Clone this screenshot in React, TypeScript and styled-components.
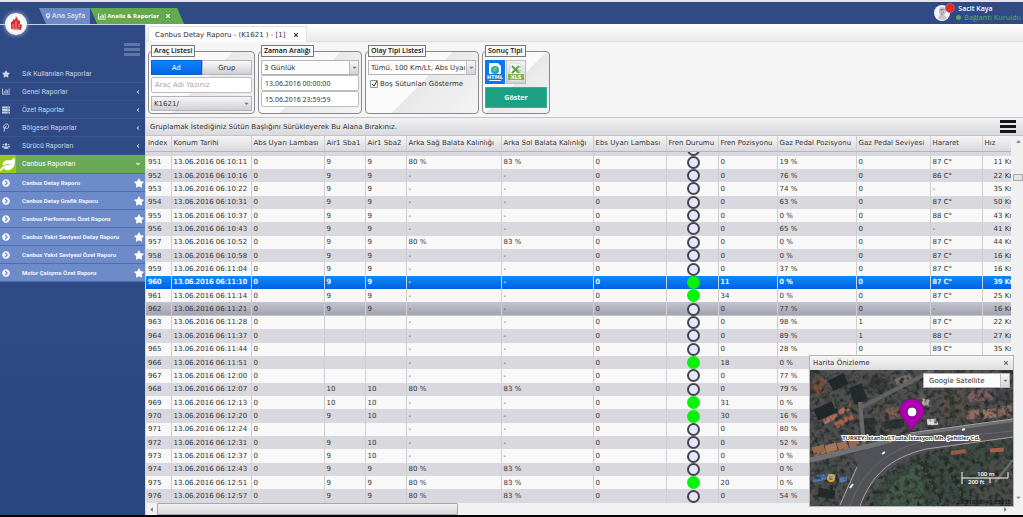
import React from 'react';
import styled, { createGlobalStyle, css } from 'styled-components';
import {
  FaStar, FaServer, FaUsers, FaLeaf, FaChevronCircleRight, FaAngleLeft, FaAngleDown,
  FaMapMarkerAlt, FaTimes, FaCaretDown, FaCaretUp, FaCaretLeft, FaCaretRight,
} from 'react-icons/fa';

const GlobalStyle = createGlobalStyle`
  *, *::before, *::after { box-sizing: border-box; }
  body { margin: 0; background: #f5f5f5; }
  button, input, select { font: inherit; color: inherit; margin: 0; padding: 0; border: 0; border-radius: 0; }
  svg { display: block; }
`;

const Page = styled.div`
  display: flex;
  flex-direction: column;
  height: 100vh;
  min-height: 400px;
  overflow: hidden;
  position: relative;
  font: 7px/10px 'DejaVu Sans', sans-serif;
  color: #333;
  border-top: 2px solid #e4e4e6;
  border-bottom: 2px solid #050505;
`;

const TopBar = styled.header`
  display: flex;
  align-items: flex-end;
  justify-content: space-between;
  height: 22px;
  flex: none;
  background: #2f4a84;
  color: #fff;
  font-family: 'Open Sans', sans-serif;
  font-weight: 600;
`;

const Tabs = styled.nav`
  display: flex;
  padding-left: 39px;
`;

const PageTab = styled.a<{ $active?: boolean }>`
  display: flex;
  align-items: center;
  gap: 1px;
  height: 16px;
  padding: 0 ${p => (p.$active ? 13 : 5)}px 0 ${p => (p.$active ? 8 : 6)}px;
  color: ${p => (p.$active ? '#fff' : '#dde6fa')};
  background: ${p => (p.$active ? '#62a94f' : '#6d8ac9')};
  font-size: ${p => (p.$active ? 6 : 7)}px;
  font-weight: ${p => (p.$active ? 700 : 600)};
  clip-path: ${p => p.$active
    ? 'polygon(0 0, calc(100% - 7px) 0, 100% 100%, 7px 100%)'
    : 'polygon(0 0, 100% 0, 100% 100%, 7px 100%)'};
  text-decoration: none;
  white-space: nowrap;
`;

const TabClose = styled.span`
  margin-left: 5px;
`;

const User = styled.div`
  display: flex;
  align-items: center;
  gap: 8px;
  height: 22px;
  padding-right: 2px;
  line-height: 9px;
`;

const Avatar = styled.div`
  position: relative;
  width: 16px;
  height: 16px;
`;

const Badge = styled.span`
  position: absolute;
  top: -2px;
  right: -5px;
  width: 10px;
  height: 10px;
  border-radius: 50%;
  background: #e2282c;
  border: 1px solid #b8646f;
`;

const Status = styled.div`
  display: flex;
  align-items: center;
  gap: 3px;
  margin-left: -2px;
  color: #4e9a62;
`;

const Dot = styled.span`
  width: 5px;
  height: 5px;
  border-radius: 50%;
  background: #58a662;
`;

const Logo = styled.div`
  position: absolute;
  left: 5px;
  top: 11px;
  width: 22px;
  height: 22px;
  border-radius: 50%;
  background: radial-gradient(#fff 50%, #e2e0e0 80%);
  box-shadow: 0 0 5px #a9b9dc;
`;

const Body = styled.div`
  display: flex;
  flex: 1;
  min-height: 0;
`;

const Sidebar = styled.aside`
  flex: none;
  width: 145px;
  border-top: 1px solid #c9d1e4;
  background: linear-gradient(#2f4a84 0 60%, #2a4681);
  color: #c9d3e8;
  font-family: Roboto, sans-serif;
`;

const MenuToggle = styled.button`
  display: flex;
  flex-direction: column;
  gap: 2px;
  width: 16px;
  margin: 18px 5px 9px auto;
  background: none;
  span { height: 3px; background: #6076a6; }
`;

const MenuList = styled.ul`
  list-style: none;
  margin: 0;
  padding: 0;
`;

const MenuItem = styled.a<{ $kind?: 'open' | 'sub' }>`
  display: flex;
  align-items: center;
  height: 18px;
  padding-right: 4px;
  border-bottom: 1px solid #3b5590;
  color: inherit;
  text-decoration: none;
  white-space: nowrap;
  ${p => p.$kind === 'open' && css`
    background: #69a854;
    border-color: #69a854;
    color: #fff;
  `}
  ${p => p.$kind === 'sub' && css`
    background: #6d8ac9;
    border-color: #4f6eb0;
    color: #f2f6ff;
    padding-right: 1px;
    font-size: 6px;
    font-weight: 700;
  `}
`;

const SubMenu = styled(MenuList)`
  border-top: 1px solid #4f6eb0;
`;

const MenuIcon = styled.span<{ $leaf?: boolean }>`
  display: flex;
  align-items: center;
  align-self: stretch;
  flex: none;
  width: 16px;
  margin-right: 6px;
  padding-left: 2px;
  font-size: 8px;
  ${p => p.$leaf && css`
    padding: 0;
    margin-bottom: -1px;
    font-size: 15px;
    background: #98c81c;
  `}
`;

const MenuText = styled.span`
  flex: 1;
`;

const Star = styled.span`
  font-size: 10px;
  color: #fff;
`;

const Main = styled.main`
  display: flex;
  flex-direction: column;
  flex: 1;
  min-width: 0;
  background: #f5f5f5;
  border-left: 1px solid #d5d9e4;
`;

const DocTabs = styled.div`
  display: flex;
  flex: none;
  height: 18px;
  padding: 2px 2px 0;
  background: linear-gradient(#fff, #e9e9ea);
  border-bottom: 1px solid #e0e0e0;
`;

const DocTab = styled.div`
  display: flex;
  align-items: center;
  gap: 8px;
  height: 16px;
  padding: 0 7px 0 6px;
  background: #fdfdfd;
  border: 1px solid #e2e2e2;
  border-bottom: 0;
`;

const Filters = styled.form`
  display: flex;
  flex: none;
  gap: 3px;
  height: 75px;
  padding: 3px 2px 3px;
`;

const Group = styled.fieldset<{ $width: number }>`
  flex: none;
  width: ${p => p.$width}px;
  min-width: 0;
  margin: 0;
  padding: 3px 2px;
  border: 1px solid #8a8a8e;
  border-radius: 4px;
  background: linear-gradient(135deg, #fafafa 0 50%, #e8e8e8 50%, #f4f4f4);
`;

const Legend = styled.legend`
  padding: 0 2px;
  border: 1px solid #77777b;
  background: #f8f8f8;
  color: #111;
  font: 600 7px/10px 'Open Sans', sans-serif;
`;

const Segments = styled.div`
  display: flex;
  margin-bottom: 2px;
`;

const Segment = styled.button<{ $on?: boolean }>`
  flex: 1;
  height: 15px;
  border: 1px solid ${p => (p.$on ? '#0a5fd0' : '#b5b5ba')};
  background: ${p => (p.$on ? 'linear-gradient(#0a86fb, #0565e6)' : 'linear-gradient(#fafafa, #cfcfd4)')};
  color: ${p => (p.$on ? '#fff' : '#333')};
`;

const TextInput = styled.input<{ $lined?: boolean }>`
  display: block;
  width: 100%;
  height: 16px;
  padding: 0 3px;
  border: 1px solid #bdbdc0;
  border-radius: 2px;
  background: #fff;
  font-family: ${p => (p.$lined ? "'Noto Sans', sans-serif" : 'inherit')};
  &::placeholder { color: #a5a5a5; opacity: 1; }
`;

const SelectBox = styled.div<{ $gray?: boolean; $top?: number }>`
  position: relative;
  margin-top: ${p => p.$top ?? 0}px;
  select {
    display: block;
    appearance: none;
    width: 100%;
    height: 15px;
    padding: 0 10px 0 2px;
    border: 1px solid #b4b4b8;
    background: ${p => (p.$gray ? 'linear-gradient(#f6f6f6, #d0d0d5)' : '#fcfcfc')};
  }
`;

const Arrow = styled.span<{ $plain?: boolean }>`
  position: absolute;
  inset: 1px 1px 1px auto;
  width: 9px;
  display: flex;
  align-items: center;
  justify-content: center;
  color: #77777c;
  pointer-events: none;
  border-left: ${p => (p.$plain ? '0' : '1px solid #bcbcc0')};
  background: ${p => (p.$plain ? 'none' : 'linear-gradient(#f6f6f6, #d4d4d8)')};
`;

const Check = styled.label`
  display: flex;
  align-items: center;
  gap: 2px;
  margin-top: 4px;
  padding-left: 2px;
  input {
    appearance: none;
    width: 8px;
    height: 8px;
    border: 1px solid #8f8f94;
    border-radius: 1px;
    background: #fff;
  }
  svg { position: absolute; pointer-events: none; }
`;

const Formats = styled.div`
  display: flex;
  gap: 1px;
  margin-bottom: 3px;
`;

const Format = styled.button<{ $on?: boolean }>`
  width: 20px;
  height: 24px;
  display: flex;
  align-items: center;
  justify-content: center;
  background: ${p => (p.$on ? '#0878ee' : 'linear-gradient(#f4f4f4, #cfcfd4)')};
  border: 1px solid ${p => (p.$on ? '#0878ee' : '#bdbdc2')};
`;

const Show = styled.button`
  width: 100%;
  height: 21px;
  background: #1ba083;
  border: 1px solid #35b095;
  color: #fff;
  font: 700 7px/10px 'Noto Sans', sans-serif;
`;

const GroupBar = styled.div`
  display: flex;
  align-items: center;
  justify-content: space-between;
  flex: none;
  height: 19px;
  padding: 0 7px 0 4px;
  border: 1px solid #c4c4c8;
  border-width: 1px 0;
  background: linear-gradient(#f2f2f2, #d9d9de);
`;

const GridMenu = styled.button`
  display: flex;
  flex-direction: column;
  gap: 2px;
  width: 16px;
  background: none;
  span { height: 3px; background: #15151c; }
`;

const GridArea = styled.div`
  display: flex;
  flex: 1;
  min-height: 0;
`;

const TableWrap = styled.div`
  flex: 1;
  min-width: 0;
  overflow: hidden;
`;

const Table = styled.table`
  width: 100%;
  height: 100%;
  table-layout: fixed;
  border-collapse: collapse;
  white-space: nowrap;
  th, td {
    padding: 0 0 0 2px;
    overflow: hidden;
    text-align: left;
    font-weight: 400;
    border-right: 1px solid #cfcfd3;
    line-height: 12px;
  }
  th:last-child, td:last-child { border-right: 0; }
  td:last-child { padding-left: 11px; }
`;

const HeadRow = styled.tr`
  height: 15px;
  background: linear-gradient(#f5f5f5, #d9d9de);
  th { border-bottom: 1px solid #b4b4ba; }
`;

const PartialRow = styled.tr`
  height: 4px;
  background: #d8d8de;
  td { line-height: 4px; }
`;

const Row = styled.tr<{ $state?: 'selected' | 'hover' }>`
  background: #f8f8f8;
  &:nth-child(odd) { background: #d8d8de; }
  ${p => p.$state === 'selected' && css`
    &&& { background: linear-gradient(#0b8bfa, #0060e2); color: #fff; }
    &&& td { text-shadow: 0 0 1px #fff; }
  `}
  ${p => p.$state === 'hover' && css`
    &&& { background: linear-gradient(#c4c4ce, #a3a3b1); }
  `}
`;

const Lamp = styled.span<{ $on?: boolean }>`
  display: block;
  width: 13px;
  height: 13px;
  margin: 0 auto;
  border-radius: 50%;
  border: ${p => (p.$on ? '0' : '2px solid #44444f')};
  background: ${p => (p.$on ? '#0af20a' : '#e6e6fa')};
`;

const LampTail = styled.span`
  display: flex;
  align-items: flex-end;
  height: 4px;
  overflow: hidden;
`;

const ScrollY = styled.div`
  display: flex;
  flex-direction: column;
  align-items: center;
  flex: none;
  width: 12px;
  padding: 2px 0 2px 2px;
  background: #f0f0f1;
  color: #77777c;
`;

const ThumbY = styled.span`
  width: 10px;
  height: 7px;
  margin: 29px 0 auto;
  border: 1px solid #a8a8ac;
  background: #e6e6e8;
`;

const ScrollX = styled.div`
  display: flex;
  align-items: center;
  flex: none;
  height: 12px;
  padding: 0 14px 0 2px;
  background: #f2f2f3;
  color: #77777c;
`;

const ThumbX = styled.span`
  width: 35%;
  height: 12px;
  margin: 0 auto 0 2px;
  border: 1px solid #a8a8ac;
  border-radius: 1px;
  background: linear-gradient(#f0f0f1, #d8d8db);
`;

const MapWindow = styled.section`
  position: absolute;
  right: 9px;
  bottom: 8px;
  width: 205px;
  border: 1px solid #b4b4b8;
  background: #ececee;
`;

const MapTitle = styled.header`
  display: flex;
  align-items: center;
  justify-content: space-between;
  height: 14px;
  padding: 0 4px 0 3px;
  background: linear-gradient(#f6f6f6, #dedee1);
`;

const CloseButton = styled.button`
  background: none;
  color: #66666a;
  font-size: 6px;
`;

const MapBody = styled.div`
  position: relative;
`;

const LayerSelect = styled(SelectBox)`
  position: absolute;
  top: 3px;
  right: 3px;
  width: 87px;
  select { padding-left: 5px; }
`;

const ChartIcon = () => (
  <svg width="8" height="7" viewBox="0 0 18 16" fill="currentColor">
    <path d="M0 1h2v12h16v2H0zM4 7h2v5H4zM8 3h2v9H8zM11 5h2v7h-2zM15 1h2v11h-2z" />
  </svg>
);

const RegionIcon = () => (
  <svg width="8" height="9" viewBox="0 0 16 18" fill="none" stroke="currentColor" strokeWidth="2">
    <path d="M5 12C2 11 2 3 9 2c6 0 6 9 0 9-3 0-3-5 0-5M6 8L4 17" />
  </svg>
);

const menu = [
  ['Sık Kullanılan Raporlar', <FaStar />],
  ['Genel Raporlar', <ChartIcon />],
  ['Özet Raporlar', <FaServer />],
  ['Bölgesel Raporlar', <RegionIcon />],
  ['Sürücü Raporları', <FaUsers />],
] as [string, React.ReactNode][];

const subMenu = [
  'Canbus Detay Raporu', 'Canbus Detay Grafik Raporu', 'Canbus Performans Özet Raporu',
  'Canbus Yakıt Seviyesi Detay Raporu', 'Canbus Yakıt Seviyesi Özet Raporu', 'Motor Çalışma Özet Raporu',
];

const columns: [string, number | null][] = [
  ['Index', 25], ['Konum Tarihi', 80], ['Abs Uyarı Lambası', 73], ['Air1 Sba1', 41], ['Air1 Sba2', 41],
  ['Arka Sağ Balata Kalınlığı', 95], ['Arka Sol Balata Kalınlığı', 92], ['Ebs Uyarı Lambası', 73],
  ['Fren Durumu', 52], ['Fren Pozisyonu', 59], ['Gaz Pedal Pozisyonu', 79], ['Gaz Pedal Seviyesi', 74],
  ['Hararet', 52], ['Hız', null],
];

// time, sba1, sba2, brake pads known, brake position, gas position, gas level, heat, speed
type Entry = [string, string, string, boolean, number, number, number, string, number];
const entries: Entry[] = [
  ['10:11', '9', '9', true, 0, 19, 0, '87 C°', 11],
  ['10:16', '9', '9', false, 0, 76, 0, '86 C°', 22],
  ['10:22', '9', '9', false, 0, 74, 0, '-', 35],
  ['10:31', '9', '9', false, 0, 63, 0, '87 C°', 50],
  ['10:37', '9', '9', false, 0, 0, 0, '88 C°', 43],
  ['10:43', '9', '9', false, 0, 65, 0, '-', 41],
  ['10:52', '9', '9', true, 0, 0, 0, '87 C°', 44],
  ['10:58', '9', '9', false, 0, 0, 0, '87 C°', 16],
  ['11:04', '9', '9', false, 0, 37, 0, '87 C°', 16],
  ['11:10', '9', '9', false, 11, 0, 0, '87 C°', 39],
  ['11:14', '9', '9', false, 34, 0, 0, '87 C°', 25],
  ['11:21', '9', '9', false, 0, 77, 0, '-', 16],
  ['11:28', '', '', false, 0, 98, 1, '87 C°', 22],
  ['11:37', '', '', false, 0, 89, 1, '88 C°', 27],
  ['11:44', '', '', false, 0, 28, 0, '89 C°', 35],
  ['11:51', '', '', false, 18, 0, 0, '', 0],
  ['12:00', '', '', false, 0, 77, 0, '', 0],
  ['12:07', '10', '10', true, 0, 79, 0, '', 0],
  ['12:13', '10', '10', false, 31, 0, 0, '', 0],
  ['12:20', '9', '10', false, 30, 16, 0, '', 0],
  ['12:24', '', '', false, 0, 80, 0, '', 0],
  ['12:31', '9', '10', false, 0, 52, 0, '', 0],
  ['12:37', '9', '10', false, 0, 0, 0, '', 0],
  ['12:43', '9', '9', true, 0, 0, 0, '', 0],
  ['12:51', '9', '9', true, 20, 0, 0, '', 0],
  ['12:57', '9', '9', true, 0, 54, 0, '', 0],
];

const treeDots = Array.from({ length: 110 }, (_, i) => ({
  x: 108 + ((i * 37) % 50),
  y: 88 + ((i * 23) % 48),
  r: 1 + (i % 2),
}));

const blocks: [number, number, number, number, number, string][] = [
  [2, 8, 13, 17, 12, '#75503f'], [20, 6, 17, 12, -25, '#22292c'], [41, 15, 14, 18, -20, '#252c2d'],
  [60, 7, 17, 13, 20, '#393c39'], [5, 35, 20, 12, -25, '#20282a'], [24, 48, 20, 6, -30, '#a7604a'],
  [13, 46, 15, 5, -28, '#b6735f'], [28, 37, 14, 5, -28, '#b07055'], [53, 48, 12, 19, 0, '#303735'],
  [62, 32, 15, 9, -30, '#535047'], [76, 38, 13, 10, -14, '#80614f'], [86, 6, 16, 10, -20, '#776f67'],
  [104, 23, 18, 14, 12, '#575b58'], [112, 29, 7, 8, 10, '#b5afa5'], [117, 49, 11, 6, -3, '#e2e0da'],
  [74, 50, 20, 8, -8, '#2c3531'], [158, 20, 24, 11, -6, '#7b6063'], [156, 40, 13, 9, -6, '#926c60'],
  [173, 39, 13, 9, -6, '#9a7466'], [188, 36, 14, 10, -6, '#89685e'], [186, 20, 17, 12, 8, '#444548'],
  [141, 80, 15, 7, -8, '#9b5747'], [180, 78, 14, 7, -5, '#a7604c'], [3, 76, 12, 9, -16, '#986a52'],
  [16, 74, 11, 10, -16, '#a77858'], [28, 72, 10, 9, -16, '#a37054'], [39, 70, 10, 8, -14, '#976c57'],
  [5, 95, 22, 13, 8, '#434849'], [3, 105, 13, 6, -8, '#4a83b9'], [16, 104, 10, 5, 6, '#649cc4'],
  [29, 107, 8, 5, -6, '#557dae'], [8, 119, 17, 9, 10, '#232d2b'],
];
const roofs = blocks.filter(([, y, , h]) => y > 68 && h < 11 && y < 90);

const SatelliteMap = () => (
  <svg width="100%" viewBox="0 0 203 136" role="img" aria-label="Harita">
    <defs>
      <filter id="grain" x="0" y="0" width="100%" height="100%" colorInterpolationFilters="sRGB">
        <feTurbulence type="fractalNoise" baseFrequency="0.2" numOctaves="3" seed="8" />
        <feColorMatrix values="0 0 0 0 .13  0 0 0 0 .15  0 0 0 0 .16  2 1.4 0 0 -1.5" />
      </filter>
    </defs>
    <rect width="203" height="136" fill="#4f504e" />
    <path d="M131 16l22 0 4 32-24 3z" fill="#5a5048" />
    <path d="M140 18l4 30" stroke="#3f463c" strokeWidth="5" />
    {blocks.map(([x, y, w, h, a, c], i) => (
      <rect key={i} x={x} y={y} width={w} height={h} fill={c} transform={`rotate(${a} ${x + w / 2} ${y + h / 2})`} />
    ))}
    <path d="M58 136C68 112 88 92 116 82l87-14v68z" fill="#3f4b42" />
    <path d="M72 136c3-18 20-34 38-42l5 42z" fill="#455a48" />
    <path d="M158 104l45-22v54h-39z" fill="#4b4e48" />
    {treeDots.map((d, i) => <circle key={i} cx={d.x} cy={d.y} r={d.r} fill={i % 3 ? '#26322b' : '#4d5549'} />)}
    <rect width="203" height="136" filter="url(#grain)" />
    {roofs.map(([x, y, w, h, a, c], i) => (
      <rect key={i} x={x} y={y} width={w} height={h - 3} fill={c} transform={`rotate(${a} ${x + w / 2} ${y + h / 2})`} />
    ))}
    <path d="M50 32l4 44" stroke="#6a696a" strokeWidth="4" />
    <path d="M50 38L100 12 123 0" fill="none" stroke="#636366" strokeWidth="4" />
    <path d="M185 112l18-22" stroke="#716f6b" strokeWidth="2" />
    <path d="M0 90L55 77 100 66 203 52" fill="none" stroke="#737173" strokeWidth="5" />
    <path d="M29 136L47 95l-4-12 20-5 40-12 100-14v15l-73 11C90 86 62 106 50 136z" fill="#515158" />
    <path d="M40 136C52 101 78 77 124 69l79-8" fill="none" stroke="#69676d" strokeWidth="1" />
    <path d="M50 136C61 106 79 88 116 79l87-12" fill="none" stroke="#aaa39b" strokeWidth="1" />
    <path d="M30 135l17-38M100 63l103-14" fill="none" stroke="#aaa7a3" strokeWidth="1" />
    <path d="M40 118l3-4M72 84l3-2M152 60l3-1" stroke="#eee" strokeWidth="2" />
    <circle cx="21" cy="108" r="3" fill="none" stroke="#e8a22f" strokeWidth="2" />
    <path d="M101 61C98 51 90 48 90 41a12 12 0 0 1 24 0c0 7-9 11-13 20z" fill="#b000b4" stroke="#85008b" strokeWidth="1" />
    <circle cx="102" cy="42" r="5" fill="#fff" stroke="#5c0064" strokeWidth="1" />
    <text x="101" y="70" textAnchor="middle" fontFamily="'Open Sans', sans-serif" fontSize="6" fontWeight="600" fill="#111" stroke="#fff" strokeWidth="2" paintOrder="stroke">
      TURKEY,İstanbul,Tuzla,İstasyon Mh. Şehitler Cd.
    </text>
    <path d="M152 102v6h46v-6M152 108v6M180 108v5" fill="none" stroke="#fff" strokeWidth="1" />
    <g fontFamily="'Open Sans', sans-serif" fontSize="6" fontWeight="600" fill="#fff">
      <text x="167" y="106">100 m</text>
      <text x="158" y="114">200 ft</text>
    </g>
    <text x="201" y="134" textAnchor="end" fontFamily="'Noto Sans', sans-serif" fontSize="6" fill="#0b0b0b">29.31913, 40.83218</text>
  </svg>
);

export default function App() {
  return (
    <Page>
      <GlobalStyle />
      <TopBar>
        <Tabs>
          <PageTab href="#home"><FaMapMarkerAlt size={6} />Ana Sayfa</PageTab>
          <PageTab href="#reports" $active><ChartIcon />Analiz &amp; Raporlar<TabClose><FaTimes size={6} /></TabClose></PageTab>
        </Tabs>
        <User>
          <Avatar>
            <svg width="16" height="16" viewBox="0 0 16 16">
              <circle cx="8" cy="8" r="8" fill="#f4f4f4" />
              <path d="M5 5c0-4 7-4 7 0 0 3-1 4-2 5l3 3c-2 2-7 2-9 0l2-3C5 9 5 7 5 5z" fill="#c3c3c5" />
              <path d="M6 5c2 0 3 0 4-1M7 7h1M9 7h1M7 9h2" stroke="#88888c" strokeWidth="1" />
            </svg>
            <Badge />
          </Avatar>
          <div>
            Sacit Kaya
            <Status><Dot />Bağlantı Kuruldu</Status>
          </div>
        </User>
      </TopBar>
      <Body>
        <Sidebar>
          <MenuToggle aria-label="Menü"><span /><span /><span /></MenuToggle>
          <MenuList>
            {menu.map(([label, icon], i) => (
              <li key={label}>
                <MenuItem href="#menu">
                  <MenuIcon>{icon}</MenuIcon>
                  <MenuText>{label}</MenuText>
                  {i > 0 && <FaAngleLeft size={6} />}
                </MenuItem>
              </li>
            ))}
            <li>
              <MenuItem href="#canbus" $kind="open">
                <MenuIcon $leaf><FaLeaf /></MenuIcon>
                <MenuText>Canbus Raporları</MenuText>
                <FaAngleDown size={6} />
              </MenuItem>
              <SubMenu>
                {subMenu.map(label => (
                  <li key={label}>
                    <MenuItem href="#canbus" $kind="sub">
                      <MenuIcon><FaChevronCircleRight /></MenuIcon>
                      <MenuText>{label}</MenuText>
                      <Star><FaStar /></Star>
                    </MenuItem>
                  </li>
                ))}
              </SubMenu>
            </li>
          </MenuList>
        </Sidebar>
        <Main>
          <DocTabs>
            <DocTab>Canbus Detay Raporu - (K1621 ) - [1]<FaTimes size={6} /></DocTab>
          </DocTabs>
          <Filters onSubmit={e => e.preventDefault()}>
            <Group $width={107}>
              <Legend>Araç Listesi</Legend>
              <Segments>
                <Segment type="button" $on>Ad</Segment>
                <Segment type="button">Grup</Segment>
              </Segments>
              <TextInput placeholder="Araç Adı Yazınız" aria-label="Araç Adı" />
              <SelectBox $gray $top={3}>
                <select aria-label="Araç"><option>K1621/</option></select>
                <Arrow $plain><FaCaretDown /></Arrow>
              </SelectBox>
            </Group>
            <Group $width={104}>
              <Legend>Zaman Aralığı</Legend>
              <SelectBox>
                <select aria-label="Zaman Aralığı"><option>3 Günlük</option></select>
                <Arrow><FaCaretDown /></Arrow>
              </SelectBox>
              <TextInput $lined defaultValue="13.06.2016 00:00:00" aria-label="Başlangıç" />
              <TextInput $lined defaultValue="15.06.2016 23:59:59" aria-label="Bitiş" />
            </Group>
            <Group $width={114}>
              <Legend>Olay Tipi Listesi</Legend>
              <SelectBox>
                <select aria-label="Olay Tipi"><option>Tümü, 100 Km/Lt, Abs Uyarı</option></select>
                <Arrow><FaCaretDown /></Arrow>
              </SelectBox>
              <Check>
                <input type="checkbox" defaultChecked />
                <svg width="8" height="8" viewBox="0 0 8 8"><path d="M2 4l2 2 3-5" fill="none" stroke="#222" strokeWidth="1" /></svg>
                Boş Sütunları Gösterme
              </Check>
            </Group>
            <Group $width={68}>
              <Legend>Sonuç Tipi</Legend>
              <Formats>
                <Format type="button" $on aria-label="HTML">
                  <svg width="16" height="20" viewBox="0 0 16 20">
                    <path d="M2 1h9l3 3v15H2z" fill="#eef6fb" />
                    <circle cx="8" cy="8" r="4" fill="#2f9fc0" />
                    <path d="M6 6l3-1 1 2-2 3-2-1z" fill="#6bc56a" />
                    <rect y="12" width="16" height="6" fill="#1e74cf" />
                    <text x="8" y="17" fontSize="5" fontWeight="700" textAnchor="middle" fill="#fff">HTML</text>
                  </svg>
                </Format>
                <Format type="button" aria-label="XLS">
                  <svg width="16" height="20" viewBox="0 0 16 20">
                    <path d="M2 1h9l3 3v15H2z" fill="#f8faf6" stroke="#d4d9d0" />
                    <path d="M4 4l7 7M11 4l-7 7" stroke="#5b9d45" strokeWidth="2" />
                    <path d="M9 5h4M9 8h4M9 10h4" stroke="#86b873" />
                    <rect y="12" width="16" height="6" fill="#7fbb3d" />
                    <text x="8" y="17" fontSize="5" fontWeight="700" textAnchor="middle" fill="#fff">XLS</text>
                  </svg>
                </Format>
              </Formats>
              <Show type="submit">Göster</Show>
            </Group>
          </Filters>
          <GroupBar>
            <span>Gruplamak İstediğiniz Sütün Başlığını Sürükleyerek Bu Alana Bırakınız.</span>
            <GridMenu aria-label="Tablo menüsü"><span /><span /><span /></GridMenu>
          </GroupBar>
          <GridArea>
            <TableWrap>
              <Table>
                <colgroup>
                  {columns.map(([name, w]) => <col key={name} width={w ?? undefined} />)}
                </colgroup>
                <thead>
                  <HeadRow>{columns.map(([name]) => <th key={name}>{name}</th>)}</HeadRow>
                </thead>
                <tbody>
                  <PartialRow>
                    {columns.map(([name]) => <td key={name}>{name === 'Fren Durumu' && <LampTail><Lamp /></LampTail>}</td>)}
                  </PartialRow>
                  {entries.map(([time, a, b, pads, brake, gas, level, heat, speed], i) => (
                    <Row key={time} $state={i === 9 ? 'selected' : i === 11 ? 'hover' : undefined}>
                      <td>{951 + i}</td>
                      <td>13.06.2016 06:{time}</td>
                      <td>0</td>
                      <td>{a}</td>
                      <td>{b}</td>
                      <td>{pads ? '80 %' : '-'}</td>
                      <td>{pads ? '83 %' : '-'}</td>
                      <td>0</td>
                      <td><Lamp $on={brake > 0} /></td>
                      <td>{brake}</td>
                      <td>{gas} %</td>
                      <td>{heat ? level : ''}</td>
                      <td>{heat}</td>
                      <td>{heat ? `${speed} Km/s` : ''}</td>
                    </Row>
                  ))}
                </tbody>
              </Table>
            </TableWrap>
            <ScrollY><FaCaretUp /><ThumbY /><FaCaretDown /></ScrollY>
          </GridArea>
          <ScrollX><FaCaretLeft /><ThumbX /><FaCaretRight /></ScrollX>
        </Main>
      </Body>
      <Logo>
        <svg width="22" height="22" viewBox="0 0 22 22">
          <path d="M6 16V9l2-1V6l2 1 1-4 2 4 2 1v3l2 1-1 5z" fill="#dc2a2c" />
          <path d="M8 11v4M11 8v7M14 11v3M7 16h8" stroke="#f2a09d" strokeWidth="1" />
        </svg>
      </Logo>
      <MapWindow>
        <MapTitle>Harita Önizleme<CloseButton aria-label="Kapat"><FaTimes /></CloseButton></MapTitle>
        <MapBody>
          <SatelliteMap />
          <LayerSelect>
            <select aria-label="Harita katmanı"><option>Google Satellite</option></select>
            <Arrow><FaCaretDown /></Arrow>
          </LayerSelect>
        </MapBody>
      </MapWindow>
    </Page>
  );
}
